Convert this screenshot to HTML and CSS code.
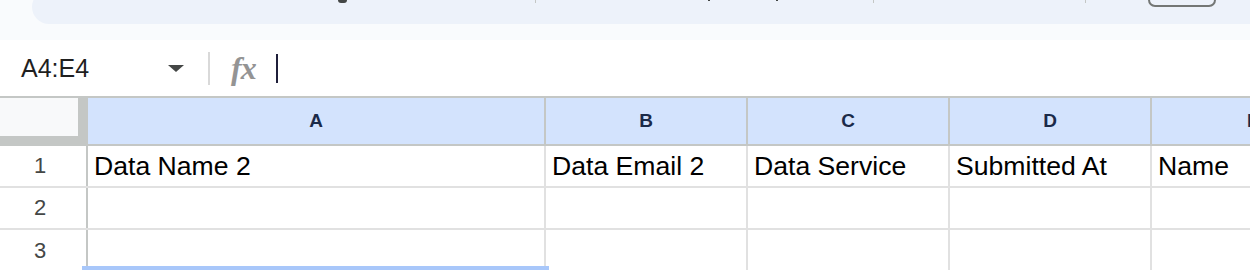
FILE: index.html
```html
<!DOCTYPE html>
<html>
<head>
<meta charset="utf-8">
<link rel="stylesheet" href="styles.css">
</head>
<body>
<div class="app">
  <div class="toolbar-wrap">
    <div class="pill">
      <div class="mark"></div>
      <div class="sep sep1"></div>
      <div class="dot dot1"></div>
      <div class="dot dot2"></div>
      <div class="sep sep2"></div>
      <div class="sep sep3"></div>
      <div class="btnbox"></div>
    </div>
  </div>
  <div class="gap"></div>
  <div class="formula-bar">
    <div class="namebox">A4:E4</div>
    <div class="caret-down"></div>
    <div class="vsep"></div>
    <div class="fx">fx</div>
    <div class="cursor"></div>
  </div>
  <div class="grid">
    <div class="row head">
      <div class="corner"><div class="corner-inner"></div></div>
      <div class="cell hcell col-a">A</div>
      <div class="cell hcell col-n">B</div>
      <div class="cell hcell col-n">C</div>
      <div class="cell hcell col-n">D</div>
      <div class="cell hcell col-e">E</div>
    </div>
    <div class="row">
      <div class="rnum">1</div>
      <div class="cell col-a">Data Name 2</div>
      <div class="cell col-n">Data Email 2</div>
      <div class="cell col-n">Data Service</div>
      <div class="cell col-n">Submitted At</div>
      <div class="cell col-e">Name</div>
    </div>
    <div class="row">
      <div class="rnum">2</div>
      <div class="cell col-a"></div>
      <div class="cell col-n"></div>
      <div class="cell col-n"></div>
      <div class="cell col-n"></div>
      <div class="cell col-e"></div>
    </div>
    <div class="row last">
      <div class="rnum">3</div>
      <div class="cell col-a"></div>
      <div class="cell col-n"></div>
      <div class="cell col-n"></div>
      <div class="cell col-n"></div>
      <div class="cell col-e"></div>
    </div>
    <div class="selection"></div>
  </div>
</div>
</body>
</html>
```
FILE: styles.css
```css
* { box-sizing: border-box; }
html, body {
  margin: 0;
  padding: 0;
  background: #f9fbfd;
  font-family: "Liberation Sans", Arial, sans-serif;
  overflow: hidden;
}
.app {
  width: 1250px;
  height: 270px;
  overflow: hidden;
}
.toolbar-wrap {
  height: 24px;
  overflow: hidden;
  padding-left: 32px;
}
.pill {
  margin-top: -10px;
  height: 34px;
  padding-top: 10px;
  background: #edf2fa;
  border-radius: 28px 0 0 28px;
  display: flex;
  align-items: flex-start;
}
.mark {
  margin-left: 306px;
  width: 9px;
  height: 3px;
  background: #444746;
  border-radius: 0 0 3px 3px;
}
.sep {
  width: 1px;
  height: 3px;
  background: #c4c7c5;
}
.sep1 { margin-left: 188px; }
.dot {
  width: 2px;
  height: 1px;
  background: #444746;
}
.dot1 { margin-left: 172px; }
.dot2 { margin-left: 66px; }
.sep2 { margin-left: 95px; }
.sep3 { margin-left: 211px; }
.btnbox {
  margin-left: 62px;
  margin-top: -10px;
  width: 68px;
  height: 17px;
  border: 2px solid #747775;
  border-radius: 7px;
}
.gap { height: 16px; }
.formula-bar {
  height: 56px;
  background: #fff;
  display: flex;
  align-items: center;
}
.namebox {
  margin-left: 21px;
  width: 147px;
  font-size: 25px;
  color: #1f1f1f;
}
.caret-down {
  width: 0;
  height: 0;
  border-left: 8px solid transparent;
  border-right: 8px solid transparent;
  border-top: 7px solid #444746;
}
.vsep {
  margin-left: 24px;
  width: 2px;
  height: 33px;
  background: #d9d9d9;
}
.fx {
  margin-left: 21px;
  font-family: "Liberation Serif", "Times New Roman", serif;
  font-style: italic;
  font-weight: bold;
  font-size: 32px;
  color: #949494;
  letter-spacing: -1px;
  line-height: 1;
}
.cursor {
  margin-left: 20px;
  width: 2px;
  height: 29px;
  background: #1f1f3a;
}
.grid {
  position: relative;
  background: #fff;
  border-top: 2px solid #c4c7c5;
}
.row {
  display: flex;
  height: 42px;
  border-bottom: 2px solid #e1e1e1;
}
.row.head {
  height: 48px;
  border-bottom: 2px solid #c4c7c5;
}
.row.last { border-bottom: none; }
.corner {
  width: 88px;
  flex: none;
  background: #c4c7c5;
}
.corner-inner {
  width: 78px;
  height: 38px;
  background: #f8f9fa;
}
.rnum {
  width: 88px;
  flex: none;
  border-right: 2px solid #c4c7c5;
  display: flex;
  align-items: center;
  justify-content: center;
  font-size: 22px;
  color: #444746;
  padding-right: 6px;
}
.cell {
  flex: none;
  border-right: 2px solid #e1e1e1;
  display: flex;
  align-items: center;
  padding-left: 6px;
  font-size: 26.6px;
  color: #000;
  white-space: nowrap;
  overflow: hidden;
}
.hcell {
  background: #d3e3fd;
  border-right-color: #c4c7c5;
  justify-content: center;
  padding-left: 0;
  font-size: 19px;
  font-weight: bold;
  color: #1b2a49;
}
.col-a { width: 458px; }
.col-n { width: 202px; }
.col-e { width: 200px; }
.hcell.col-e { justify-content: flex-start; padding-left: 95px; }
.selection {
  position: absolute;
  left: 82px;
  top: 168px;
  width: 467px;
  height: 6px;
  background: #a8c7fa;
}
```
